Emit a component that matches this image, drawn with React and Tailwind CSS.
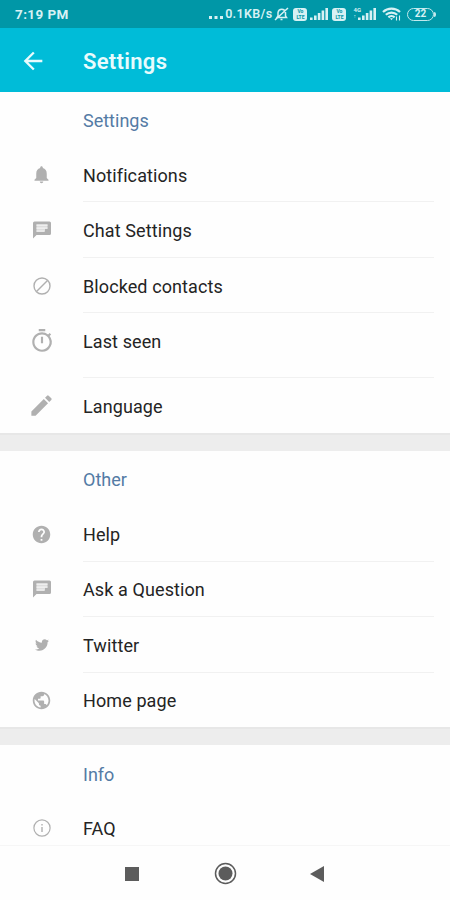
import { FaTwitter } from "react-icons/fa";
import { MdArrowBack, MdEdit, MdHelp, MdNotifications, MdOutlineTimer, MdPublic } from "react-icons/md";

function BlockedIcon() {
  return (
    <svg className="size-[18px]" viewBox="0 0 18 18" fill="none" stroke="currentColor" strokeWidth="1.4">
      <circle cx="9" cy="9" r="8" />
      <path d="M3.5 14.5l11-11" />
    </svg>
  );
}

function ChatIcon() {
  return (
    <svg className="size-[18px]" viewBox="0 0 18 18">
      <path d="M1.5 0.5h15A1.5 1.5 0 0 1 18 2v10.5a1.5 1.5 0 0 1-1.5 1.5H3.5L0 17.5V2A1.5 1.5 0 0 1 1.5.5z" fill="currentColor" />
      <path d="M3.5 3.5h11v4h-2.5v3H3.5z" fill="#dddddd" />
      <path d="M3.5 4.2h11M3.5 7.2h11M3.5 10.2h8" stroke="#f4f4f4" strokeWidth="1.3" />
    </svg>
  );
}

function InfoIcon() {
  return (
    <svg className="size-[18px]" viewBox="0 0 18 18" fill="none" stroke="currentColor" strokeWidth="1.2">
      <circle cx="9" cy="9" r="8.1" />
      <path d="M9 8v5M9 5v1.5" strokeWidth="1.4" />
    </svg>
  );
}

const sections = [
  {
    title: "Settings",
    titleHeight: "h-[55px] pt-[2px]",
    items: [
      { label: "Notifications", icon: <MdNotifications className="size-[21px]" />, height: "h-[55px]" },
      { label: "Chat Settings", icon: <ChatIcon />, height: "h-14" },
      { label: "Blocked contacts", icon: <BlockedIcon />, height: "h-[55px]" },
      { label: "Last seen", icon: <MdOutlineTimer className="size-[26px]" />, height: "h-[65px] pb-[9px]" },
      { label: "Language", icon: <MdEdit className="size-[27px]" />, height: "h-[55px]" },
    ],
  },
  {
    title: "Other",
    titleHeight: "h-14",
    items: [
      { label: "Help", icon: <MdHelp className="size-[21px]" />, height: "h-[55px] pb-px" },
      { label: "Ask a Question", icon: <ChatIcon />, height: "h-[55px] pb-px" },
      { label: "Twitter", icon: <FaTwitter className="size-[14px]" />, height: "h-[56px]" },
      { label: "Home page", icon: <MdPublic className="size-[21px]" />, height: "h-[54px]" },
    ],
  },
  {
    title: "Info",
    titleHeight: "h-14 pt-[2px]",
    items: [{ label: "FAQ", icon: <InfoIcon />, height: "h-[55px] pb-px" }],
  },
];

function Signal() {
  return (
    <svg className="h-3 w-[18px]" viewBox="0 0 18 12" fill="currentColor">
      <path d="M0 9.5h2.6V12H0zM4 7.5h2.6V12H4zM7.8 5h2.6v7H7.8zM11.6 2.5h2.6V12h-2.6zM15.4 0H18v12h-2.6z" />
    </svg>
  );
}

function VolteBadge() {
  return (
    <span className="flex h-[13px] w-[14px] flex-col items-center justify-center rounded-[3px] bg-[#d7f1f4] text-[5px] leading-[6px] font-bold text-[#0596a6]">
      <span>Vo</span>
      <span>LTE</span>
    </span>
  );
}

function StatusBar() {
  return (
    <div className="flex h-7 shrink-0 items-center bg-[#0097a7] pr-[14px] pl-[15px] text-[#d7f1f4]">
      <span className="text-[13.5px] leading-4 font-bold tracking-[0.4px]">7:19 PM</span>
      <span className="ml-auto flex items-end">
        <svg className="mr-[2px] mb-[3px] h-[3px] w-[14px]" viewBox="0 0 14 3" fill="currentColor">
          <path d="M0 0h3v3H0zM5.5 0h3v3h-3zM11 0h3v3h-3z" />
        </svg>
        <span className="text-[12.5px] leading-4 font-semibold tracking-[0.35px]">0.1KB/s</span>
      </span>
      <svg className="ml-[2px] h-[14px] w-[15px]" viewBox="0 0 15 14" fill="none" stroke="currentColor" strokeWidth="1.5">
        <path d="M3 10.5h9.5L11.5 9V5.5A3.8 3.8 0 0 0 4 5.5V9zM6.5 12.5h2M1 13L14 1" />
      </svg>
      <span className="ml-1">
        <VolteBadge />
      </span>
      <span className="ml-[3px]">
        <Signal />
      </span>
      <span className="ml-1">
        <VolteBadge />
      </span>
      <span className="ml-[7px] flex">
        <span className="-mt-px -mr-[3px] flex flex-col text-[6px] leading-[6px] font-bold">
          <span>4G</span>
          <span className="text-[5px]">↑</span>
        </span>
        <Signal />
      </span>
      <svg className="ml-[6px] h-[14px] w-5" viewBox="0 0 20 14" fill="none" stroke="currentColor" strokeWidth="2.2">
        <path d="M1 5a12.4 12.4 0 0 1 17 0M3.8 7.8a8.4 8.4 0 0 1 11.4 0M6.4 10.4a4.5 4.5 0 0 1 6.2 0" />
        <path d="M8 11.3h3l-1.5 2z" fill="currentColor" stroke="none" />
        <path d="M14.5 13.5V9.5M17.5 8.5v5" strokeWidth="1.1" />
      </svg>
      <span className="ml-[5px] flex items-center">
        <span className="flex h-[13px] w-[27px] items-center justify-center rounded-full border-[1.5px] border-[#c2e9ed] text-[10px] leading-none font-bold">
          22
        </span>
        <span className="h-[5px] w-[2px] rounded-r-sm bg-[#c2e9ed]" />
      </span>
    </div>
  );
}

function SettingsRow({ item }) {
  return (
    <div className={`flex ${item.height}`}>
      <div className="flex w-[83px] items-center justify-center text-[#b0b0b0]">{item.icon}</div>
      <div className="flex items-center pt-px text-[18px] tracking-[0.1px] text-[#242424]">{item.label}</div>
    </div>
  );
}

function Section({ section }) {
  return (
    <section className="shrink-0 bg-[#fefefe]">
      <h2 className={`flex items-center pl-[83px] text-[18px] text-[#547ba5] ${section.titleHeight}`}>{section.title}</h2>
      {section.items.map((item, index) => (
        <div key={item.label}>
          <SettingsRow item={item} />
          {index < section.items.length - 1 && <div className="-mt-px mr-4 ml-[83px] h-px bg-[#f1f1f1]" />}
        </div>
      ))}
    </section>
  );
}

export default function App() {
  return (
    <div className="flex h-[900px] w-[450px] flex-col overflow-hidden bg-[#fefefe] font-[Roboto,sans-serif]">
      <StatusBar />
      <header className="flex h-16 shrink-0 items-center bg-[#00bcd8] pt-[3px] text-[#e8fbfd]">
        <MdArrowBack className="mb-[2px] ml-[19px] size-[28px]" />
        <h1 className="ml-9 text-[22px] font-semibold tracking-[0.3px]">Settings</h1>
      </header>
      <main className="flex h-[753px] shrink-0 flex-col overflow-hidden">
        {sections.map((section, index) => (
          <div key={section.title} className="shrink-0">
            {index > 0 && <div className="h-[18px] border-t-2 border-[#e7e7e7] bg-[#ededed]" />}
            <Section section={section} />
          </div>
        ))}
      </main>
      <nav className="flex h-[55px] shrink-0 items-center border-t border-[#f6f6f6] pt-px pl-[125px] text-[#5c5c5c]">
        <div className="size-[14px] bg-[#5c5c5c]" />
        <svg className="ml-[75px] size-[23px]" viewBox="0 0 23 23">
          <circle cx="11.5" cy="11.5" r="10" fill="none" stroke="currentColor" strokeWidth="1.5" />
          <circle cx="11.5" cy="11.5" r="7" fill="currentColor" />
        </svg>
        <svg className="ml-[73px] h-4 w-[14px]" viewBox="0 0 14 16" fill="currentColor">
          <path d="M0 8L14 0v16z" />
        </svg>
      </nav>
    </div>
  );
}
